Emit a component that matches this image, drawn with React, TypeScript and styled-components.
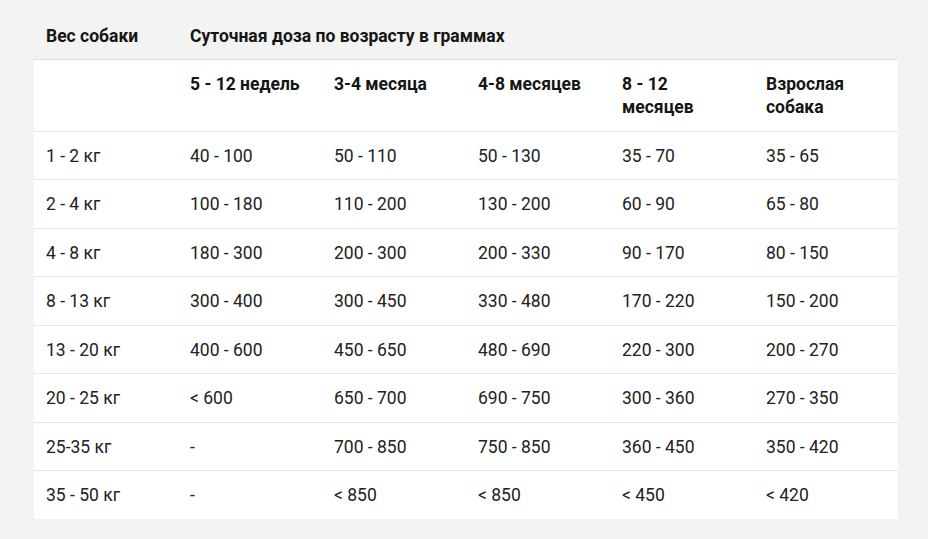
import styled, { createGlobalStyle } from "styled-components";

const GlobalStyle = createGlobalStyle`
  html, body {
    margin: 0;
    padding: 0;
    background: #f3f3f3;
  }
  body {
    font-family: Roboto, "Liberation Sans", Arial, sans-serif;
    color: #1f1f1f;
  }
`;

const ages = ["5 - 12 недель", "3-4 месяца", "4-8 месяцев", "8 - 12 месяцев", "Взрослая собака"];

const rows: [string, string[]][] = [
  ["1 - 2 кг", ["40 - 100", "50 - 110", "50 - 130", "35 - 70", "35 - 65"]],
  ["2 - 4 кг", ["100 - 180", "110 - 200", "130 - 200", "60 - 90", "65 - 80"]],
  ["4 - 8 кг", ["180 - 300", "200 - 300", "200 - 330", "90 - 170", "80 - 150"]],
  ["8 - 13 кг", ["300 - 400", "300 - 450", "330 - 480", "170 - 220", "150 - 200"]],
  ["13 - 20 кг", ["400 - 600", "450 - 650", "480 - 690", "220 - 300", "200 - 270"]],
  ["20 - 25 кг", ["< 600", "650 - 700", "690 - 750", "300 - 360", "270 - 350"]],
  ["25-35 кг", ["-", "700 - 850", "750 - 850", "360 - 450", "350 - 420"]],
  ["35 - 50 кг", ["-", "< 850", "< 850", "< 450", "< 420"]],
];

export default function App() {
  return (
    <Page>
      <GlobalStyle />
      <Table>
        <colgroup>
          {Array.from({ length: 6 }).map((_, i) => (
            <col key={i} style={{ width: 144 }} />
          ))}
        </colgroup>
        <thead>
          <tr>
            <HeadCell $top>Вес собаки</HeadCell>
            <HeadCell $top colSpan={5}>
              Суточная доза по возрасту в граммах
            </HeadCell>
          </tr>
        </thead>
        <tbody>
          <AgeRow>
            <HeadCell />
            {ages.map((a) => (
              <HeadCell key={a}>{a}</HeadCell>
            ))}
          </AgeRow>
          {rows.map(([weight, doses]) => (
            <BodyRow key={weight}>
              <Cell>{weight}</Cell>
              {doses.map((d, i) => (
                <Cell key={i}>{d}</Cell>
              ))}
            </BodyRow>
          ))}
        </tbody>
      </Table>
    </Page>
  );
}

const Page = styled.div`
  padding: 12px 32px 20px 34px;
`;

const Table = styled.table`
  width: 862px;
  border-collapse: collapse;
  table-layout: fixed;
  font-size: 17.5px;
  line-height: 23.5px;
`;

const AgeRow = styled.tr`
  background: #ffffff;
  border-top: 1px solid #dedede;
  border-bottom: 1px solid #e6e6e6;
`;

const BodyRow = styled.tr`
  background: #ffffff;
  border-bottom: 1px solid #e6e6e6;
  &:last-child {
    border-bottom: none;
  }
`;

const HeadCell = styled.th<{ $top?: boolean }>`
  padding: ${(p) => (p.$top ? "13px 12px 10px" : "13px 12px 11px")};
  text-align: left;
  vertical-align: top;
  font-weight: 700;
  color: #151515;
`;

const Cell = styled.td`
  padding: 13px 12px 11px;
  text-align: left;
  vertical-align: top;
  font-weight: 400;
  color: #222222;
`;
